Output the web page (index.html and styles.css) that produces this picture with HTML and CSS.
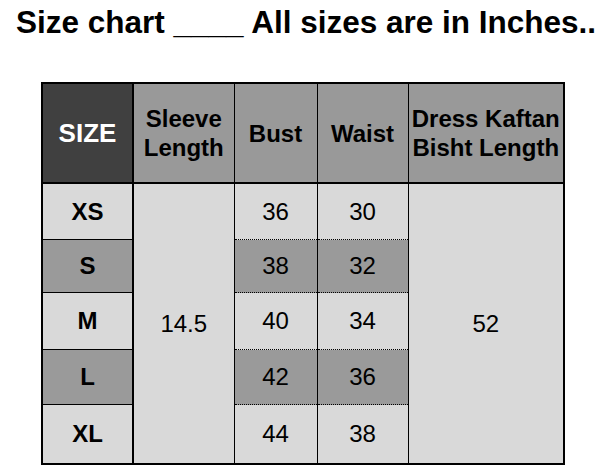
FILE: index.html
```html
<!DOCTYPE html>
<html lang="en">
<head>
<meta charset="utf-8">
<title>Size chart</title>
<link rel="stylesheet" href="styles.css">
</head>
<body>
<div class="page">
  <h1 class="title">Size chart ____ All sizes are in Inches..</h1>
  <table class="chart">
    <colgroup>
      <col class="c-size">
      <col class="c-sleeve">
      <col class="c-bust">
      <col class="c-waist">
      <col class="c-length">
    </colgroup>
    <thead>
      <tr class="head">
        <th class="size-head">SIZE</th>
        <th>Sleeve<br>Length</th>
        <th>Bust</th>
        <th>Waist</th>
        <th>Dress Kaftan<br>Bisht Length</th>
      </tr>
    </thead>
    <tbody>
      <tr class="row light first r-xs">
        <td class="label">XS</td>
        <td class="span" rowspan="5">14.5</td>
        <td class="num">36</td>
        <td class="num">30</td>
        <td class="span" rowspan="5">52</td>
      </tr>
      <tr class="row dark r-s">
        <td class="label">S</td>
        <td class="num">38</td>
        <td class="num">32</td>
      </tr>
      <tr class="row light r-m">
        <td class="label">M</td>
        <td class="num">40</td>
        <td class="num">34</td>
      </tr>
      <tr class="row dark r-l">
        <td class="label">L</td>
        <td class="num">42</td>
        <td class="num">36</td>
      </tr>
      <tr class="row light r-xl">
        <td class="label">XL</td>
        <td class="num">44</td>
        <td class="num">38</td>
      </tr>
    </tbody>
  </table>
</div>
</body>
</html>
```

FILE: styles.css
```css
html, body {
  margin: 0;
  padding: 0;
  background: #ffffff;
}

.page {
  width: 602px;
  height: 476px;
  overflow: hidden;
  padding: 4px 0 0 16px;
  box-sizing: border-box;
  font-family: "Liberation Sans", Arial, sans-serif;
}

.title {
  margin: 0;
  width: max-content;
  font-size: 31.5px;
  line-height: 36px;
  font-weight: bold;
  color: #000;
  white-space: nowrap;
}

.chart {
  margin: 42px 0 0 25px;
  border-collapse: collapse;
  table-layout: fixed;
  width: 524px;
  border: 2px solid #000;
}

.c-size { width: 91px; }
.c-sleeve { width: 101px; }
.c-bust { width: 83px; }
.c-waist { width: 91px; }
.c-length { width: 156px; }

.chart th,
.chart td {
  padding: 0;
  text-align: center;
  vertical-align: middle;
  color: #000;
}

.head th {
  height: 98px;
  background: #999999;
  font-size: 24px;
  line-height: 29px;
  font-weight: bold;
  border-bottom: 2px solid #000;
  border-right: 1px solid #000;
  white-space: nowrap;
}

.head th.size-head {
  background: #404040;
  color: #ffffff;
  font-size: 26px;
  border-right: 2px solid #000;
}

.row td {
  font-size: 24px;
  line-height: 28px;
}

.r-xs td { height: 55px; }
.r-s td { height: 52px; }
.r-m td { height: 56px; }
.r-l td { height: 54px; }
.r-xl td { height: 58px; }

.row td.label {
  font-weight: bold;
  border-right: 2px solid #000;
  border-top: 1px solid #000;
}

.row td.num {
  border-right: 1px solid #000;
  border-top: 1px dotted #000;
}

.row.first td.label,
.row.first td.num {
  border-top: 2px solid #000;
}

.row td.span {
  background: #d9d9d9;
  border-right: 1px solid #000;
}

.row.light td.label,
.row.light td.num {
  background: #d9d9d9;
}

.row.dark td.label,
.row.dark td.num {
  background: #9a9a9a;
}
```
